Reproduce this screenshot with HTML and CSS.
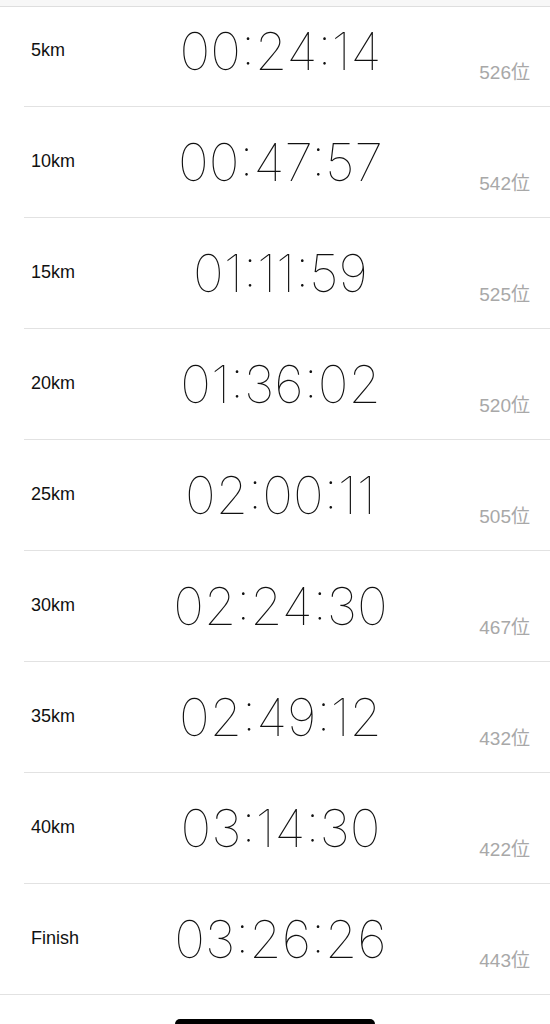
FILE: index.html
```html
<!DOCTYPE html>
<html lang="ja">
<head>
    <meta charset="UTF-8">
    <meta name="viewport" content="width=device-width, initial-scale=1.0">
    <title>Splits</title>
    <link rel="stylesheet" href="styles.css">
</head>
<body>
    <div class="screen">
        <div class="top-bar"></div>

        <!-- split list -->
        <div class="splits">
            <div class="split first">
                <span class="point">5km</span>
                <span class="time">00:24:14</span>
                <span class="rank">526位</span>
            </div>
            <div class="split">
                <span class="point">10km</span>
                <span class="time">00:47:57</span>
                <span class="rank">542位</span>
            </div>
            <div class="split">
                <span class="point">15km</span>
                <span class="time">01:11:59</span>
                <span class="rank">525位</span>
            </div>
            <div class="split">
                <span class="point">20km</span>
                <span class="time">01:36:02</span>
                <span class="rank">520位</span>
            </div>
            <div class="split">
                <span class="point">25km</span>
                <span class="time">02:00:11</span>
                <span class="rank">505位</span>
            </div>
            <div class="split">
                <span class="point">30km</span>
                <span class="time">02:24:30</span>
                <span class="rank">467位</span>
            </div>
            <div class="split">
                <span class="point">35km</span>
                <span class="time">02:49:12</span>
                <span class="rank">432位</span>
            </div>
            <div class="split">
                <span class="point">40km</span>
                <span class="time">03:14:30</span>
                <span class="rank">422位</span>
            </div>
            <div class="split last">
                <span class="point">Finish</span>
                <span class="time">03:26:26</span>
                <span class="rank">443位</span>
            </div>
        </div>

        <div class="home-area">
            <div class="home-indicator"></div>
        </div>
    </div>
</body>
</html>
```

FILE: styles.css
```css
body {
    margin: 0;
    padding: 0;
    background-color: #ffffff;
    font-family: "Liberation Sans", Arial, "Noto Sans CJK JP", sans-serif;
    color: #111;
}

.screen {
    width: 550px;
    height: 1024px;
    overflow: hidden;
}

.top-bar {
    height: 6px;
    background-color: #f7f7f7;
    border-bottom: 1px solid #dedede;
}

/* each split row */
.split {
    display: grid;
    grid-template-columns: 100px 1fr 100px;
    align-items: center;
    height: 111px;
    box-sizing: border-box;
    padding: 0 20px 2px 7px;
    margin-left: 24px;
    border-bottom: 1px solid #e2e2e2;
}

.split.first {
    height: 100px;
    padding-bottom: 13px;
}

.split.last {
    margin-left: 0;
    padding-left: 31px;
}

.point {
    font-size: 18px;
}

.time {
    justify-self: center;
    padding-top: 3px;
    font-family: Inter, "Liberation Sans", sans-serif;
    font-weight: 100;
    font-size: 52px;
}

.rank {
    justify-self: end;
    align-self: end;
    margin-bottom: 20px;
    font-size: 19px;
    color: #a8a8a8;
}

.split.first .rank {
    margin-bottom: 9px;
}

.home-area {
    display: flex;
    justify-content: center;
    padding-top: 24px;
}

.home-indicator {
    width: 200px;
    height: 10px;
    border-radius: 5px;
    background-color: #000;
}
```
